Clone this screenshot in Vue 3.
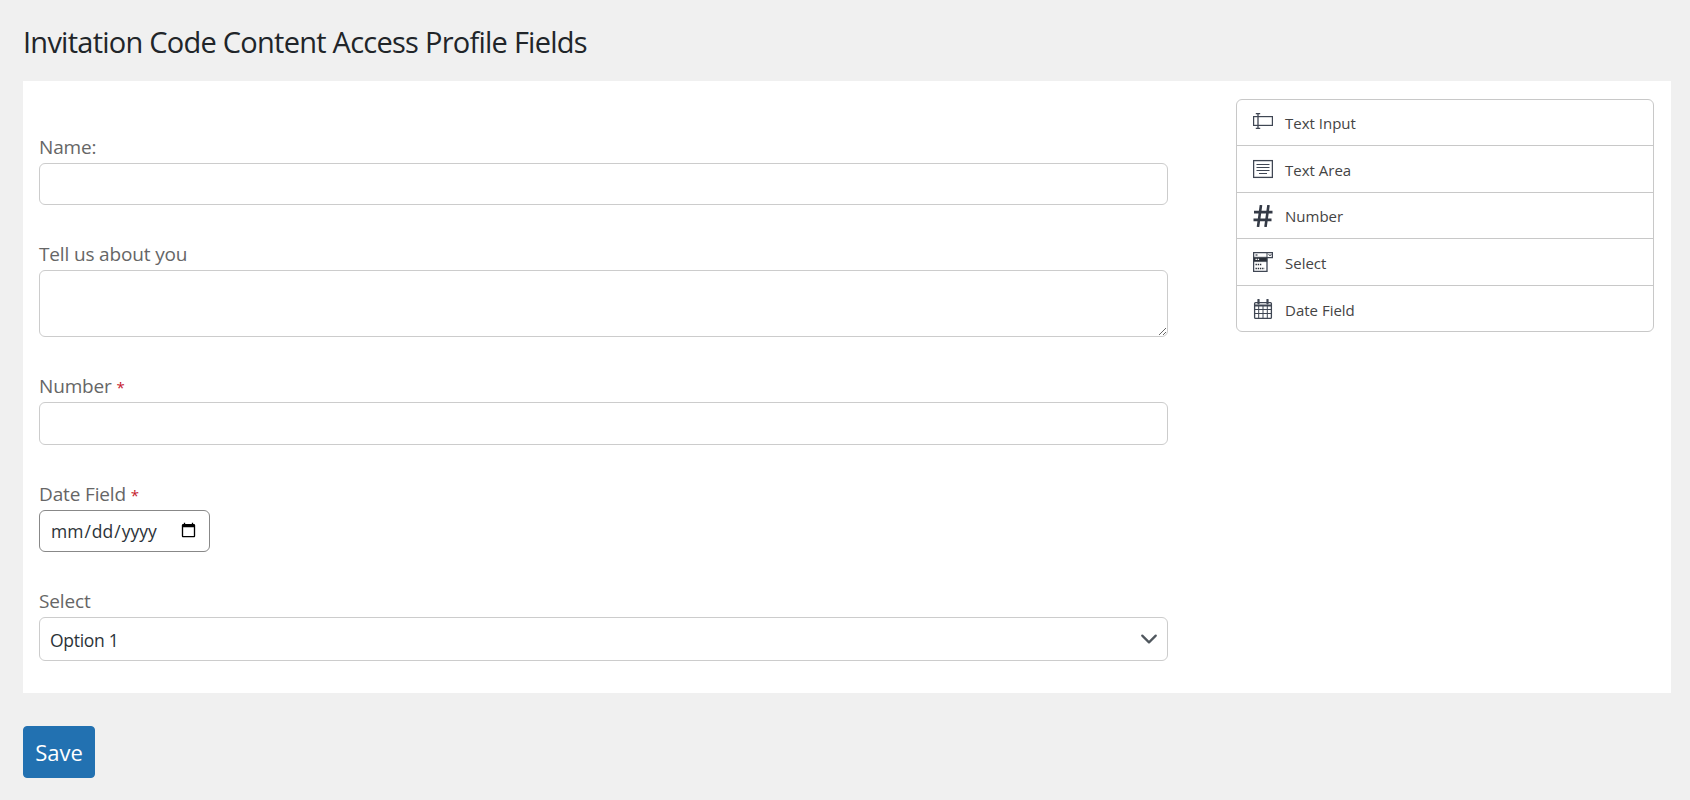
<script setup>
const tools = [
  { name: 'Text Input', kind: 'input' },
  { name: 'Text Area', kind: 'area' },
  { name: 'Number', kind: 'number' },
  { name: 'Select', kind: 'select' },
  { name: 'Date Field', kind: 'date' },
]
</script>

<template>
  <div class="page">
    <h1 class="title">Invitation Code Content Access Profile Fields</h1>
    <div class="panel">
      <form class="form" @submit.prevent>
        <div class="field f-name">
          <label class="label">Name:</label>
          <input class="control h-name" type="text" />
        </div>
        <div class="field f-about">
          <label class="label">Tell us about you</label>
          <textarea class="control area"></textarea>
        </div>
        <div class="field f-number">
          <label class="label">Number <span class="req">*</span></label>
          <input class="control h-num" type="number" />
        </div>
        <div class="field f-date">
          <label class="label">Date Field <span class="req">*</span></label>
          <input class="date" type="date" />
        </div>
        <div class="field f-select">
          <label class="label">Select</label>
          <select class="control select">
            <option>Option 1</option>
          </select>
        </div>
      </form>
      <ul class="tools">
        <li v-for="t in tools" :key="t.name" class="tool">
          <span class="icon">
            <svg v-if="t.kind === 'input'" viewBox="0 0 20 20" width="20" height="20" fill="none" stroke="#3f4653" stroke-width="1.2">
              <rect x="0.6" y="5.6" width="18.8" height="8.8" />
              <path d="M5 2.6V17.4M2.8 2.6H7.2M2.8 17.4H7.2" stroke-width="1.3" />
            </svg>
            <svg v-else-if="t.kind === 'area'" viewBox="0 0 20 20" width="20" height="20" fill="none" stroke="#3f4653">
              <rect x="0.6" y="1.6" width="18.8" height="16.8" stroke-width="1.3" />
              <path d="M3.5 5.5H16.5M3.5 8.5H16.5M3.5 11.5H16.5M6 14.5H14" stroke-width="1" />
            </svg>
            <svg v-else-if="t.kind === 'number'" viewBox="0 0 20 20" width="20" height="22" fill="none" stroke="#343a46" stroke-width="2.6" preserveAspectRatio="none">
              <path d="M8 0L5 20M15.5 0L12.5 20M1 6.5H19.5M0.5 13.5H18.5" />
            </svg>
            <svg v-else-if="t.kind === 'select'" viewBox="0 0 20 20" width="20" height="20" fill="none" stroke="#3f4653">
              <path d="M0.6 0.6H19.4V5.6H14V19.4H0.6Z" stroke-width="1.3" />
              <path d="M14 0.6V5.6" stroke-width="1" />
              <path d="M0.6 5.2H14V9.6H0.6Z" fill="#2a2f38" stroke-width="0.6" />
              <path d="M2.5 3H4.5" stroke-width="1.3" />
              <path d="M2.5 7.4H6.5" stroke="#fff" stroke-width="1.3" stroke-dasharray="1.4 0.8" />
              <path d="M2.5 12.4H9M2.5 16.4H11.5" stroke="#2a2f38" stroke-width="1.5" stroke-dasharray="1.4 0.8" />
              <path d="M15.5 2L17 4L18.4 2" stroke-width="0.9" />
            </svg>
            <svg v-else viewBox="0 0 20 20" width="20" height="20" fill="none" stroke="#3f4653">
              <rect x="1.6" y="3.6" width="16.8" height="15.8" rx="1" stroke-width="1.3" />
              <path d="M1.6 6.5H18.4" stroke-width="2" />
              <path d="M1.6 10.5H18.4M1.6 14.5H18.4M5.7 7V19M10 7V19M14.3 7V19" stroke-width="1" />
              <path d="M5.5 0.8V4.5M14.5 0.8V4.5" stroke-width="2.2" stroke-linecap="round" />
            </svg>
          </span>
          <span class="tool-name">{{ t.name }}</span>
        </li>
      </ul>
    </div>
    <button class="save" type="button">Save</button>
  </div>
</template>

<style>
html, body { margin: 0; background: #f0f0f0; }
</style>

<style scoped>
.page {
  box-sizing: border-box;
  height: 800px;
  padding: 0 19px 0 23px;
  background: #f0f0f0;
  font-family: "Open Sans", "Noto Sans", sans-serif;
  overflow: hidden;
}
.title {
  margin: 0;
  padding-top: 23px;
  height: 81px;
  box-sizing: border-box;
  font-size: 29px;
  line-height: 37px;
  font-weight: 400;
  color: #212529;
  letter-spacing: -0.75px;
}
.panel {
  display: flex;
  justify-content: space-between;
  align-items: flex-start;
  box-sizing: border-box;
  height: 612px;
  padding: 18px 17px 0 16px;
  background: #fff;
}
.form { width: 1129px; }
.field { display: flex; flex-direction: column; align-items: flex-start; }
.label {
  font-size: 19px;
  line-height: 20px;
  height: 26px;
  color: #666;
  letter-spacing: -0.15px;
}
.req { color: #c5192d; font-size: 15px; }
.f-name { padding-top: 38px; }
.f-about { margin-top: 39px; }
.f-number { margin-top: 39px; }
.f-date { margin-top: 39px; }
.f-select { margin-top: 39px; }
.control {
  box-sizing: border-box;
  display: block;
  width: 100%;
  border: 1px solid #ccc;
  border-radius: 6px;
  background: #fff;
  margin: 0;
  padding: 6px 10px;
  font-family: inherit;
  font-size: 17.5px;
  letter-spacing: -0.3px;
  color: #2c3338;
  outline: none;
}
.h-name { height: 42px; }
.h-num { height: 43px; }
.area { height: 67px; resize: vertical; }
.date {
  box-sizing: border-box;
  width: 171px;
  height: 42px;
  padding: 0 10px;
  border: 1px solid #888;
  border-radius: 6px;
  background: #fff;
  font-family: inherit;
  font-size: 17.5px;
  color: #2c3338;
}
.select {
  height: 44px;
  appearance: none;
  -webkit-appearance: none;
  background-image: url("data:image/svg+xml,%3csvg xmlns='http://www.w3.org/2000/svg' viewBox='0 0 16 16'%3e%3cpath fill='none' stroke='%2350575e' stroke-linecap='round' stroke-linejoin='round' stroke-width='2' d='m2 5 6 6 6-6'/%3e%3c/svg%3e");
  background-repeat: no-repeat;
  background-position: right 9px center;
  background-size: 18px 18px;
  padding: 8px 10px 6px;
}
.tools {
  box-sizing: border-box;
  width: 418px;
  margin: 0;
  padding: 0;
  list-style: none;
  border: 1px solid #c8c8c8;
  border-radius: 6px;
  background: #fff;
}
.tool {
  display: flex;
  align-items: center;
  height: 46.6px;
  padding: 2px 0 0 16px;
  border-top: 1px solid #c8c8c8;
  box-sizing: border-box;
}
.tool:first-child { border-top: 0; height: 45px; padding-top: 0; }
.icon { display: flex; width: 32px; margin-top: -1.5px; }
.tool:first-child .icon { margin-top: -3px; }
.tool-name { font-size: 15px; color: #444; }
.save {
  display: block;
  margin-top: 33px;
  width: 72px;
  height: 52px;
  padding: 0;
  border: 1px solid #2271b1;
  border-radius: 4px;
  background: #2271b1;
  color: #fff;
  font-family: inherit;
  font-size: 22px;
}
</style>
